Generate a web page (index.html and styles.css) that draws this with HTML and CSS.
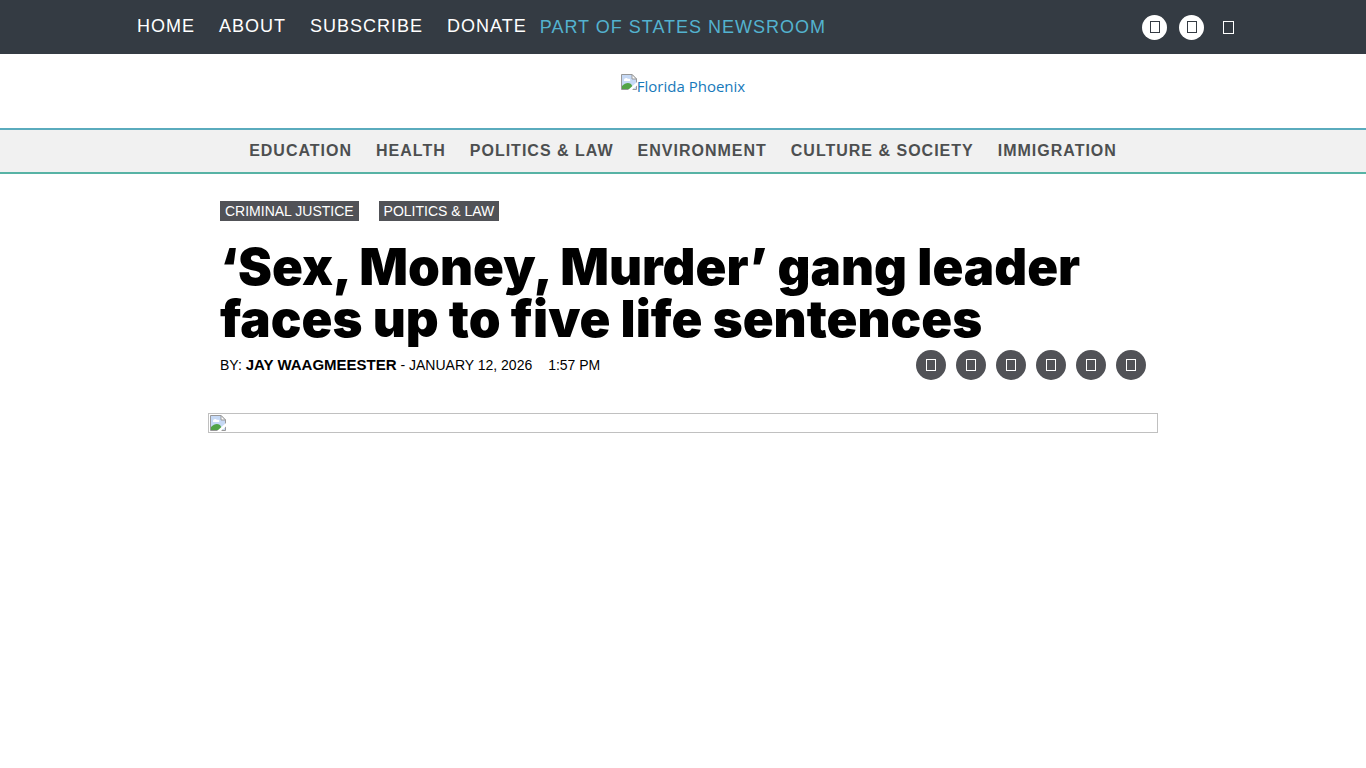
FILE: index.html
```html
<!DOCTYPE html>
<html lang="en">
<head>
    <meta charset="UTF-8">
    <meta name="viewport" content="width=device-width, initial-scale=1.0">
    <title>Florida Phoenix</title>
    <link rel="stylesheet" href="styles.css">
</head>
<body>
    <!-- Shared icons -->
    <svg class="sprite" aria-hidden="true">
        <symbol id="glyph" viewBox="0 0 10 12">
            <rect x="0.5" y="0.5" width="9" height="11" fill="none" stroke="currentColor"/>
        </symbol>
        <symbol id="glyph-large" viewBox="0 0 11 13">
            <rect x="0.5" y="0.5" width="10" height="12" fill="none" stroke="currentColor"/>
        </symbol>
        <symbol id="picture" viewBox="0 0 16 16">
            <path d="M0.5 0.5H11L15.5 5V15.5H0.5Z" fill="#c6d9f5" stroke="#999999"/>
            <path d="M3 6c0-2 3-3 4-1 2-1 3 1 2 2H3Z" fill="#fff"/>
            <path d="M1 15v-3c3-3 6-4 9-2l3 5Z" fill="#52a447"/>
            <path d="M11 0.5V5h4.5Z" fill="#fff" stroke="#999999"/>
            <path d="M16 8L7 16H11L16 11.500Z" fill="#fff"/>
        </symbol>
    </svg>

    <!-- Top bar -->
    <header class="top-bar">
        <div class="top-inner">
            <nav class="top-menu" aria-label="Main">
                <a href="#">HOME</a>
                <a href="#">ABOUT</a>
                <a href="#">SUBSCRIBE</a>
                <a href="#">DONATE</a>
            </nav>
            <a class="newsroom" href="#">PART OF STATES NEWSROOM</a>
            <div class="top-social">
                <a class="round" href="#" aria-label="Facebook"><svg class="glyph"><use href="#glyph"/></svg></a>
                <a class="round" href="#" aria-label="Twitter"><svg class="glyph"><use href="#glyph"/></svg></a>
                <button class="search" type="button" aria-label="Search"><svg class="glyph-large"><use href="#glyph-large"/></svg></button>
            </div>
        </div>
    </header>

    <!-- Logo -->
    <div class="logo-row">
        <a class="logo" href="#"><svg class="picture"><use href="#picture"/></svg><span>Florida Phoenix</span></a>
    </div>

    <!-- Sections -->
    <nav class="section-menu" aria-label="Sections">
        <a href="#">EDUCATION</a>
        <a href="#">HEALTH</a>
        <a href="#">POLITICS &amp; LAW</a>
        <a href="#">ENVIRONMENT</a>
        <a href="#">CULTURE &amp; SOCIETY</a>
        <a href="#">IMMIGRATION</a>
    </nav>

    <!-- Article -->
    <main class="article">
        <div class="article-head">
            <div class="tags">
                <a href="#">CRIMINAL JUSTICE</a>
                <a href="#">POLITICS &amp; LAW</a>
            </div>
            <h1>‘Sex, Money, Murder’ gang leader faces up to five life sentences</h1>
            <div class="meta">
                <p class="byline">BY: <a href="#">JAY WAAGMEESTER</a> - JANUARY 12, 2026 <span class="time">1:57 PM</span></p>
                <div class="share">
                    <a href="#" aria-label="Share by email"><svg class="glyph"><use href="#glyph"/></svg></a>
                    <a href="#" aria-label="Share on Facebook"><svg class="glyph"><use href="#glyph"/></svg></a>
                    <a href="#" aria-label="Share on Twitter"><svg class="glyph"><use href="#glyph"/></svg></a>
                    <a href="#" aria-label="Share on LinkedIn"><svg class="glyph"><use href="#glyph"/></svg></a>
                    <a href="#" aria-label="Share on Reddit"><svg class="glyph"><use href="#glyph"/></svg></a>
                    <a href="#" aria-label="Print"><svg class="glyph"><use href="#glyph"/></svg></a>
                </div>
            </div>
        </div>
        <div class="lead-image"><svg class="picture"><use href="#picture"/></svg></div>
    </main>
</body>
</html>
```
FILE: styles.css
```css
* {
    margin: 0;
    padding: 0;
    box-sizing: border-box;
}

body {
    font-family: "Liberation Sans", Arial, sans-serif;
    background: #ffffff;
    color: #000000;
}

a {
    color: inherit;
    text-decoration: none;
}

.sprite {
    display: none;
}

.glyph {
    width: 10px;
    height: 12px;
}

.glyph-large {
    width: 11px;
    height: 13px;
}

.picture {
    width: 16px;
    height: 16px;
}

/* Top bar */
.top-bar {
    background: #343b43;
}

.top-inner {
    max-width: 1140px;
    margin: 0 auto;
    padding: 13px 12px 13px 24px;
    display: flex;
    align-items: center;
    font-size: 18px;
    line-height: 26px;
    letter-spacing: 1px;
}

.top-menu {
    display: flex;
    gap: 24px;
    padding-bottom: 2px;
    color: #ffffff;
}

.newsroom {
    margin-left: 13px;
    color: #53b2cf;
}

.top-social {
    margin-left: auto;
    display: flex;
    gap: 12px;
}

.top-social .round,
.search {
    width: 25px;
    height: 25px;
    display: flex;
    align-items: center;
    justify-content: center;
}

.top-social .round {
    background: #ffffff;
    color: #343b43;
    border-radius: 50%;
}

.search {
    background: none;
    border: none;
    color: #ffffff;
    cursor: pointer;
}

/* Logo */
.logo-row {
    display: flex;
    justify-content: center;
    padding: 20px 12px 30px;
}

.logo {
    display: flex;
    font-family: "Open Sans", "Noto Sans", sans-serif;
    font-size: 15px;
    line-height: 24px;
    color: #1779ba;
}

/* Section menu */
.section-menu {
    display: flex;
    justify-content: center;
    flex-wrap: wrap;
    gap: 0 24px;
    padding: 9px 12px;
    background: #f1f1f1;
    border-top: 2px solid #5aabbd;
    border-bottom: 2px solid #57b3a5;
    color: #4d4f50;
    font-size: 16px;
    font-weight: bold;
    line-height: 24px;
    letter-spacing: 1px;
}

/* Article */
.article {
    max-width: 950px;
    margin: 0 auto;
    padding-top: 27px;
}

.article-head {
    padding: 0 12px;
}

.tags {
    display: flex;
    gap: 20px;
    font-size: 14px;
    line-height: 20px;
    color: #ffffff;
}

.tags a {
    padding: 0 5px;
    background: #515257;
}

h1 {
    margin-top: 20px;
    font-family: "Arial Black", Inter, sans-serif;
    font-size: 51px;
    font-weight: 900;
    line-height: 52px;
}

.meta {
    display: flex;
    align-items: center;
    justify-content: space-between;
    margin-top: 5px;
}

.byline {
    font-size: 14px;
    line-height: 20px;
}

.byline a {
    font-size: 15px;
    font-weight: bold;
}

.time {
    margin-left: 12px;
}

.share {
    display: flex;
    gap: 10px;
}

.share a {
    width: 30px;
    height: 30px;
    display: flex;
    align-items: center;
    justify-content: center;
    border-radius: 50%;
    background: #515257;
    color: #ffffff;
}

.lead-image {
    display: flex;
    margin-top: 33px;
    padding: 1px;
    border: 1px solid #c0c0c0;
}
```
